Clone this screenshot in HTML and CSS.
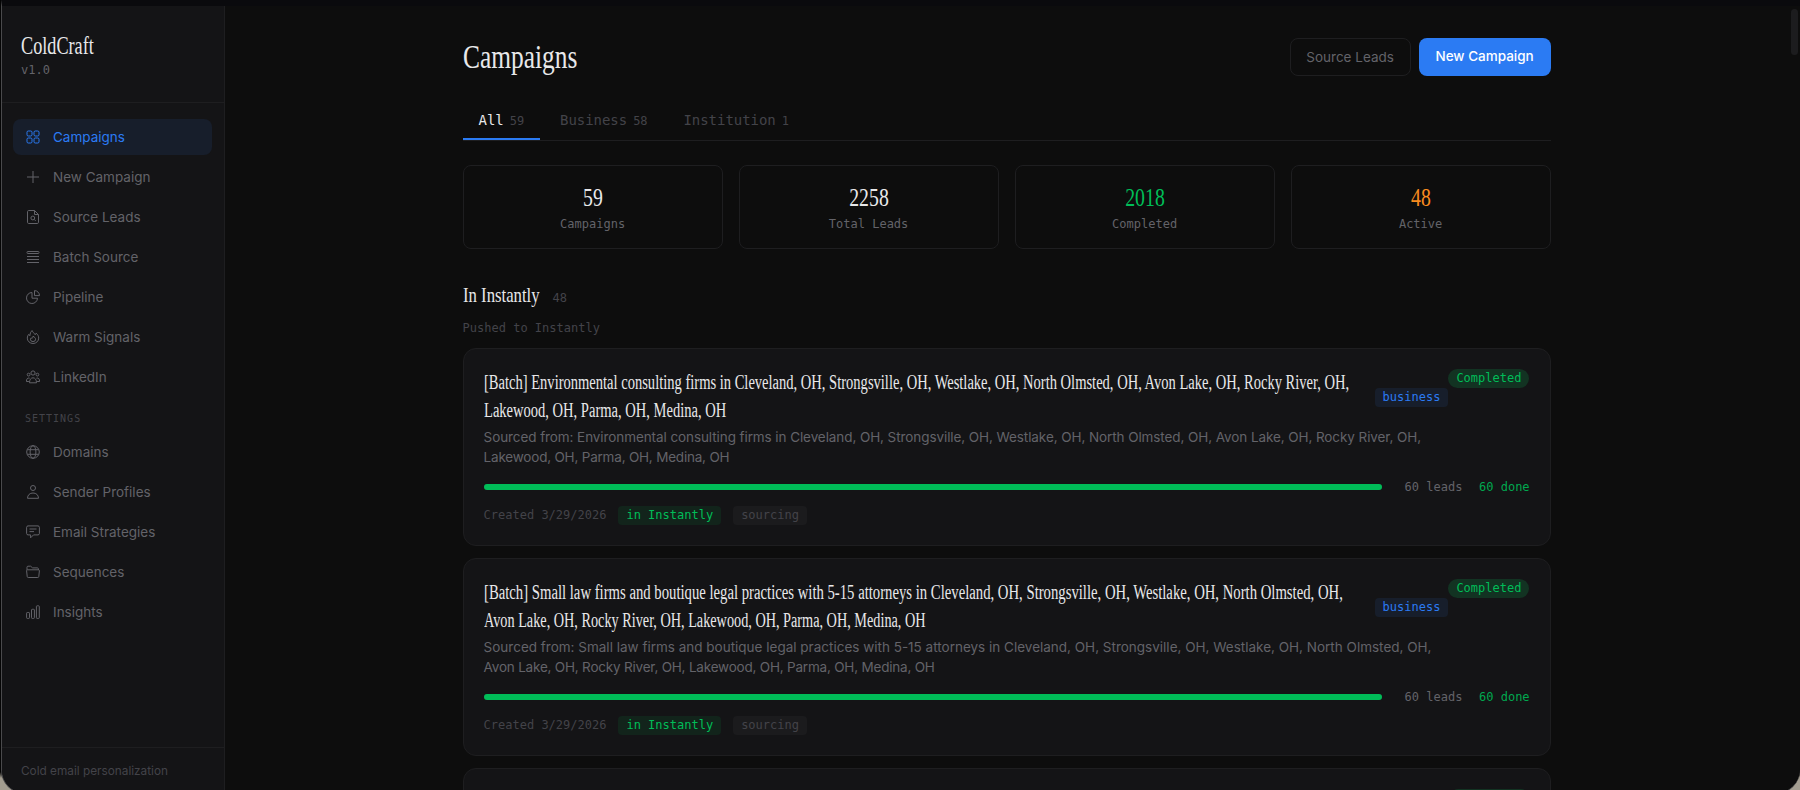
FILE: index.html
```html
<!DOCTYPE html>
<html lang="en">
<head>
  <meta charset="UTF-8" />
  <meta name="viewport" content="width=device-width, initial-scale=1.0" />
  <title>ColdCraft</title>
  <link rel="stylesheet" href="styles.css">
</head>
<body>
<div class="window">
  <aside class="sidebar">
    <div class="brand">
      <div class="logo"><span class="serif">ColdCraft</span></div>
      <div class="version">v1.0</div>
    </div>
    <nav class="nav">
      <a class="nav-item active"><svg viewBox="0 0 14 14"><rect x="1" y="1" width="5" height="5" rx="1.3"/><rect x="8" y="1" width="5" height="5" rx="1.3"/><rect x="1" y="8" width="5" height="5" rx="1.3"/><rect x="8" y="8" width="5" height="5" rx="1.3"/></svg><span>Campaigns</span></a>
      <a class="nav-item"><svg viewBox="0 0 14 14"><path d="M7 1v12M1 7h12"/></svg><span>New Campaign</span></a>
      <a class="nav-item"><svg viewBox="0 0 14 14"><path d="M8.5.5H2.7c-.7 0-1.2.5-1.2 1.2v10.6c0 .7.5 1.2 1.2 1.2h8.6c.7 0 1.2-.5 1.2-1.2V4.500zM8.500.5v4h4"/><circle cx="6.800" cy="8" r="1.900"/><path d="M8.200 9.400l1.500 1.500"/></svg><span>Source Leads</span></a>
      <a class="nav-item"><svg viewBox="0 0 14 14"><rect x="1" y="1.500" width="12" height="2" rx=".8"/><path d="M1 6.500h12M1 9.500h12M1 12.500h12"/></svg><span>Batch Source</span></a>
      <a class="nav-item"><svg viewBox="0 0 14 14"><path d="M6 2.500a5.500 5.500 0 1 0 5.500 5.700H6z"/><path d="M8.500.6v5h5A5 5 0 0 0 8.500.6z"/></svg><span>Pipeline</span></a>
      <a class="nav-item"><svg viewBox="0 0 14 14"><path d="M6.200.5c.4 2 2.300 2.700 2.800 4.200.8-.3 1-.9 1.200-1.500 1.600 1.400 2.500 3 2.500 4.900a5.700 5.400 0 0 1-11.400 0C1.300 6.500 2 5.200 2.800 4.300c.2.800.6 1.200 1.200 1.400C4 3.500 4.600 1.700 6.200.5z"/><path d="M7 6.200c1.600.9 2.600 1.900 2.600 3a2.600 2.400 0 0 1-5.200 0c0-.5.200-1 .6-1.400.5.600 1 .6 1.300.4.400-.4.600-1 .7-2z"/></svg><span>Warm Signals</span></a>
      <a class="nav-item"><svg viewBox="0 0 14 14"><circle cx="7" cy="3" r="2.100"/><circle cx="2.600" cy="4.600" r="1.400"/><circle cx="11.400" cy="4.600" r="1.400"/><path d="M3.500 12.800c0-3 1.300-5 3.500-5s3.500 2 3.500 5zM3.600 8.200C1.500 7.500.4 9 .4 11.500h2.500M10.400 8.200c2.100-.7 3.200.8 3.200 3.300h-2.500"/></svg><span>LinkedIn</span></a>
      <div class="nav-label">SETTINGS</div>
      <a class="nav-item"><svg viewBox="0 0 14 14"><circle cx="7" cy="7" r="6.300"/><ellipse cx="7" cy="7" rx="2.900" ry="6.300"/><path d="M1.300 4.700h11.400M1.300 9.300h11.400"/></svg><span>Domains</span></a>
      <a class="nav-item"><svg viewBox="0 0 14 14"><circle cx="7" cy="3" r="2.500"/><path d="M1.500 13.300C1.500 10 3.800 8 7 8s5.500 2 5.500 5.300z"/></svg><span>Sender Profiles</span></a>
      <a class="nav-item"><svg viewBox="0 0 14 14"><path d="M2 .9h10c.8 0 1.400.6 1.400 1.400v6.200c0 .8-.6 1.400-1.400 1.400H7.500L4.600 12.800V9.900H2C1.200 9.900.6 9.300.6 8.500V2.300C.6 1.500 1.200.9 2 .9zM3.500 4h7M3.500 6.600h4.500"/></svg><span>Email Strategies</span></a>
      <a class="nav-item"><svg viewBox="0 0 14 14"><path d="M1 5V2.200c0-.6.4-1 1-1h2.600l2 1.700h4.800c.6 0 1 .4 1 1V5"/><path d="M1.500 4.800h11c.6 0 .9.400.9 1l-.6 5.700c0 .6-.5 1-1 1H2.200c-.6 0-1-.4-1-1L.6 5.800c0-.6.3-1 .9-1z"/></svg><span>Sequences</span></a>
      <a class="nav-item"><svg viewBox="0 0 14 14"><rect x=".6" y="7.500" width="2.900" height="5.900" rx=".7"/><rect x="5.500" y="4.300" width="2.900" height="9.100" rx=".7"/><rect x="10.400" y=".8" width="2.900" height="12.600" rx=".7"/></svg><span>Insights</span></a>
    </nav>
    <div class="side-foot">Cold email personalization</div>
  </aside>

  <main class="main">
    <div class="content">
      <header class="page-head">
        <h1><span class="serif">Campaigns</span></h1>
        <div class="actions">
          <button class="btn">Source Leads</button>
          <button class="btn primary">New Campaign</button>
        </div>
      </header>

      <div class="tabs">
        <div class="tab active">All <small>59</small></div>
        <div class="tab">Business <small>58</small></div>
        <div class="tab">Institution <small>1</small></div>
      </div>

      <div class="stats">
        <div class="stat"><div class="num"><span class="serif">59</span></div><div class="label">Campaigns</div></div>
        <div class="stat"><div class="num"><span class="serif">2258</span></div><div class="label">Total Leads</div></div>
        <div class="stat green"><div class="num"><span class="serif">2018</span></div><div class="label">Completed</div></div>
        <div class="stat orange"><div class="num"><span class="serif">48</span></div><div class="label">Active</div></div>
      </div>

      <div class="section-head">
        <h2><span class="serif">In Instantly</span></h2>
        <span class="count">48</span>
      </div>
      <p class="hint">Pushed to Instantly</p>

      <div class="cards">
        <article class="card">
          <div class="card-top">
            <h3>
              <span class="serif">[Batch] Environmental consulting firms in Cleveland, OH, Strongsville, OH, Westlake, OH, North Olmsted, OH, Avon Lake, OH, Rocky River, OH,</span>
              <span class="serif">Lakewood, OH, Parma, OH, Medina, OH</span>
            </h3>
            <span class="badge blue">business</span>
            <span class="badge pill">Completed</span>
          </div>
          <p class="desc"><span class="snug">Sourced from: Environmental consulting firms in Cleveland, OH, Strongsville, OH, Westlake, OH, North Olmsted, OH, Avon Lake, OH, Rocky River, OH,</span><br><span class="tight">Lakewood, OH, Parma, OH, Medina, OH</span></p>
          <div class="progress">
            <div class="track"><div class="fill" style="width:100%"></div></div>
            <span class="leads">60 leads</span>
            <span class="done">60 done</span>
          </div>
          <div class="meta">
            <span>Created 3/29/2026</span>
            <span class="badge instantly">in Instantly</span>
            <span class="badge muted">sourcing</span>
          </div>
        </article>

        <article class="card">
          <div class="card-top">
            <h3>
              <span class="serif wide">[Batch] Small law firms and boutique legal practices with 5-15 attorneys in Cleveland, OH, Strongsville, OH, Westlake, OH, North Olmsted, OH,</span>
              <span class="serif thin">Avon Lake, OH, Rocky River, OH, Lakewood, OH, Parma, OH, Medina, OH</span>
            </h3>
            <span class="badge blue">business</span>
            <span class="badge pill">Completed</span>
          </div>
          <p class="desc">Sourced from: Small law firms and boutique legal practices with 5-15 attorneys in Cleveland, OH, Strongsville, OH, Westlake, OH, North Olmsted, OH,<br><span class="tight">Avon Lake, OH, Rocky River, OH, Lakewood, OH, Parma, OH, Medina, OH</span></p>
          <div class="progress">
            <div class="track"><div class="fill" style="width:100%"></div></div>
            <span class="leads">60 leads</span>
            <span class="done">60 done</span>
          </div>
          <div class="meta">
            <span>Created 3/29/2026</span>
            <span class="badge instantly">in Instantly</span>
            <span class="badge muted">sourcing</span>
          </div>
        </article>

        <article class="card next"><span class="badge pill"></span></article>
      </div>
    </div>
    <div class="scroll-thumb"></div>
  </main>
</div>
</body>
</html>
```

FILE: styles.css
```css
:root {
  --bg: #0d0d0d;
  --panel: #141416;
  --line: #1e1e20;
  --text: #e8e8ea;
  --muted: #636369;
  --dim: #434349;
  --blue: #2b7bf3;
  --green: #00bd58;
  --sans: "Inter", sans-serif;
  --mono: "DejaVu Sans Mono", monospace;
}
* { box-sizing: border-box; }
body {
  margin: 0;
  height: 790px;
  overflow: hidden;
  background: linear-gradient(#050505 772px, #a39d90 778px);
  font-family: var(--sans);
  font-size: 13.5px;
  color: var(--text);
}
h1, h2, h3, p { margin: 0; font-weight: 400; }

.window {
  display: flex;
  height: 794px;
  margin-left: 1px;
  border: 1px solid #4a4a4c;
  border-top: 6px solid #0a0a0d;
  border-right: none;
  border-radius: 0 0 24px 24px;
  background: var(--bg);
  overflow: hidden;
}

/* narrow display serif */
.serif {
  display: inline-block;
  font-family: "Liberation Serif", serif;
  white-space: nowrap;
  transform: scaleX(0.76);
  transform-origin: left center;
}

/* Sidebar */
.sidebar {
  width: 223px;
  flex: none;
  display: flex;
  flex-direction: column;
  background: var(--panel);
  border-right: 1px solid var(--line);
}
.brand {
  height: 97px;
  padding: 23px 19px 0;
  border-bottom: 1px solid var(--line);
}
.logo { font-size: 26px; line-height: 32px; }
.logo .serif { transform: scaleX(0.7); }
.version {
  font: 12px/16px var(--mono);
  color: var(--muted);
}
.nav {
  flex: 1;
  display: flex;
  flex-direction: column;
  gap: 4px;
  padding: 16px 12px 0 11px;
}
.nav-item {
  display: flex;
  align-items: center;
  gap: 13px;
  height: 36px;
  padding-left: 13px;
  border-radius: 8px;
  color: var(--muted);
}
.nav-item span { padding-bottom: 1px; }
.nav-item.active { background: #171e2b; color: var(--blue); }
.nav-item svg {
  width: 14px;
  height: 14px;
  fill: none;
  stroke: currentColor;
  stroke-width: 1;
  stroke-linejoin: round;
}
.nav-label {
  height: 31px;
  padding: 10px 12px 0;
  font: 10px/20px var(--mono);
  letter-spacing: 1px;
  color: var(--dim);
}
.side-foot {
  height: 46px;
  padding-left: 19px;
  border-top: 1px solid var(--line);
  font-size: 11.8px;
  line-height: 46px;
  color: var(--dim);
}

/* Main */
.main {
  position: relative;
  flex: 1;
  padding: 32px 0 0 237.6px;
}
.content { width: 1088px; }
.scroll-thumb {
  position: absolute;
  top: 3px;
  right: 2px;
  width: 7px;
  height: 46px;
  border-radius: 4px;
  background: #1c1c1e;
}
.page-head {
  display: flex;
  justify-content: space-between;
  height: 38px;
  margin-bottom: 24px;
}
h1 { font-size: 33px; line-height: 36px; }
h1 .serif { transform: scaleX(0.77); }
.actions { display: flex; gap: 8px; }
.btn {
  height: 38px;
  width: 121px;
  padding: 0;
  border: 1px solid var(--line);
  border-radius: 8px;
  background: none;
  font: 13.5px var(--sans);
  color: var(--muted);
}
.btn.primary {
  width: 132px;
  border: none;
  padding-bottom: 2px;
  background: var(--blue);
  color: #fff;
  font-weight: 500;
}

.tabs {
  display: flex;
  gap: 4px;
  height: 41px;
  border-bottom: 1px solid var(--line);
  margin-bottom: 24px;
}
.tab {
  display: flex;
  align-items: baseline;
  gap: 6px;
  height: 40px;
  padding: 0 16px;
  font: 14px/40px var(--mono);
  letter-spacing: -0.05px;
  color: var(--dim);
}
.tab small { font-size: 12px; color: var(--dim); }
.tab.active { color: var(--text); border-bottom: 2px solid var(--blue); }

.stats {
  display: grid;
  grid-template-columns: repeat(4, 1fr);
  gap: 16px;
}
.stat {
  height: 84px;
  padding-top: 15px;
  border: 1px solid var(--line);
  border-radius: 8px;
  text-align: center;
}
.stat .num { font-size: 26px; line-height: 32px; }
.stat .serif { transform-origin: center; }
.stat .label { font: 12px/20px var(--mono); color: var(--muted); }
.green .num { color: var(--green); }
.orange .num { color: #f98b1f; }

.section-head {
  display: flex;
  align-items: baseline;
  margin-top: 31px;
}
h2 { width: 90px; font-size: 22px; line-height: 28px; }
.count { font: 12px var(--mono); color: var(--dim); }
.hint {
  margin: 9px 0 10px;
  font: 12px/20px var(--mono);
  color: var(--dim);
}

/* Campaign cards */
.cards { display: flex; flex-direction: column; gap: 12px; }
.card {
  height: 198px;
  padding: 20px;
  border: 1px solid var(--line);
  border-radius: 13px;
  background: var(--panel);
}
.card-top { display: flex; height: 56px; }
h3 {
  width: 891px;
  flex: none;
  margin-top: -1px;
  font-size: 20.5px;
  line-height: 28px;
}
h3 .serif { display: block; width: max-content; transform: scaleX(0.709); }
h3 .wide { transform: scaleX(0.7175); }
h3 .thin { transform: scaleX(0.695); }
.badge {
  height: 19px;
  padding: 0 8px;
  border-radius: 4px;
  font: 12px/18px var(--mono);
}
.badge.blue { margin-top: 19px; background: #171e2b; color: var(--blue); }
.badge.pill { border-radius: 10px; background: #123322; color: var(--green); }
.badge.instantly { background: #12241b; color: var(--green); }
.badge.muted { background: #1b1b1d; }
.next .badge { display: block; width: 81px; margin-left: auto; }
.desc {
  margin-top: 2px;
  line-height: 20px;
  color: var(--muted);
  white-space: nowrap;
}
.snug { letter-spacing: -0.085px; }
.tight { letter-spacing: -0.2px; }
.progress {
  display: flex;
  align-items: center;
  height: 20px;
  margin-top: 10px;
  font: 12px var(--mono);
}
.track { width: 898px; height: 6px; border-radius: 3px; background: var(--line); }
.fill { height: 6px; border-radius: 3px; background: var(--green); }
.leads { margin-left: 23px; color: var(--muted); }
.done { margin-left: auto; color: #00a84f; }
.meta {
  display: flex;
  gap: 12px;
  margin-top: 9px;
  font: 12px/19px var(--mono);
  color: var(--dim);
}
```
